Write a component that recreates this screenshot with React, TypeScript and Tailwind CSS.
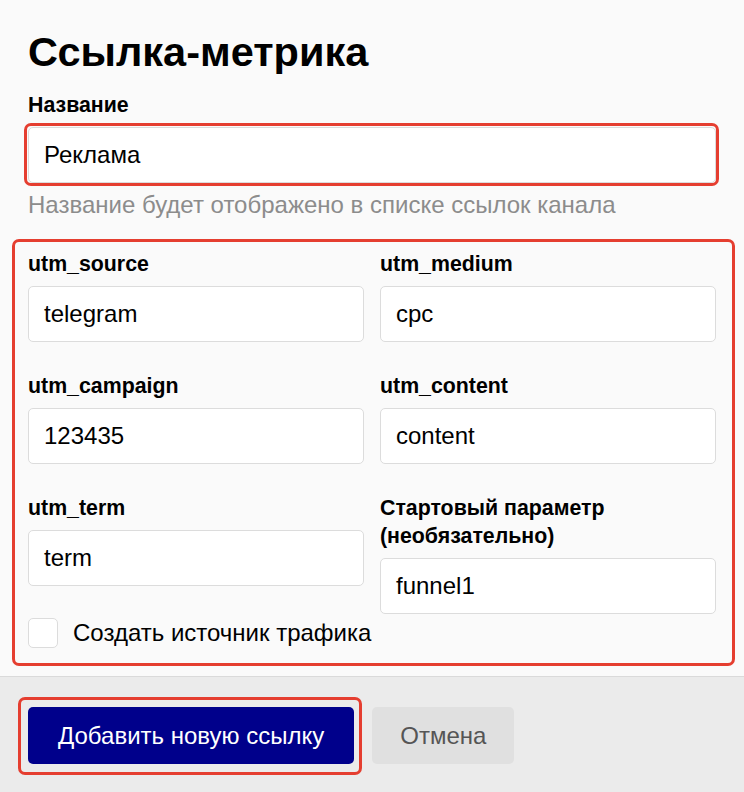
import React from "react";

const font = { fontFamily: '"Liberation Sans", Arial, sans-serif' };

function Field({ label, value }: { label: React.ReactNode; value: string }) {
  return (
    <div className="flex flex-col">
      <div className="text-[21.33px] leading-[28px] font-bold text-black">{label}</div>
      <div className="mt-2 h-[56px] rounded-[5px] border border-[#dcdcdc] bg-white px-[15px] flex items-center text-[24px] text-black">
        {value}
      </div>
    </div>
  );
}

export default function App() {
  return (
    <div className="w-[744px] h-[792px] bg-[#fafafa] flex flex-col overflow-hidden" style={font}>
      <div className="flex-1 px-7 pt-[28px]">
        <h1 className="text-[41.5px] leading-[48px] font-bold text-black">Ссылка-метрика</h1>
        <div className="mt-[15px] text-[21.33px] leading-[28px] font-bold text-black">Название</div>
        <div className="relative mt-2">
          <div className="h-[56px] rounded-[5px] border border-[#dcdcdc] bg-white px-[15px] flex items-center text-[24px] text-black">
            Реклама
          </div>
          <span className="pointer-events-none absolute -left-1 -right-[3px] -top-1 -bottom-[3px] rounded-[7px] border-[3px] border-[#e53e30]" />
        </div>
        <div className="mt-2 text-[24px] leading-[28px] text-[#8c8c8c]">
          Название будет отображено в списке ссылок канала
        </div>
        <div className="relative mt-[31px]">
          <span className="pointer-events-none absolute -left-4 -right-[19px] -top-[11px] -bottom-[18px] rounded-[7px] border-[3px] border-[#e53e30]" />
          <div className="grid grid-cols-2 gap-x-4 gap-y-[30px] items-start">
            <Field label="utm_source" value="telegram" />
            <Field label="utm_medium" value="cpc" />
            <Field label="utm_campaign" value="123435" />
            <Field label="utm_content" value="content" />
            <Field label="utm_term" value="term" />
            <Field
              label={
                <>
                  Стартовый параметр
                  <br />
                  (необязательно)
                </>
              }
              value="funnel1"
            />
          </div>
          <label className="mt-[4px] flex items-center gap-[15px]">
            <span className="w-[30px] h-[30px] rounded-[5px] border border-[#dcdcdc] bg-white" />
            <span className="text-[24px] leading-[28px] text-black">Создать источник трафика</span>
          </label>
        </div>
      </div>
      <div className="h-[116px] shrink-0 border-t border-[#dadada] bg-[#ebebeb] px-7 pt-[30px] flex items-start gap-[18px]">
        <div className="relative">
          <span className="pointer-events-none absolute -left-[10px] -right-[8px] -top-[10px] -bottom-[11px] rounded-[7px] border-[3px] border-[#e53e30]" />
          <button className="h-[57px] px-[30px] rounded-[5px] bg-[#00008b] text-white text-[24px]">
            Добавить новую ссылку
          </button>
        </div>
        <button className="h-[57px] px-[28px] rounded-[5px] bg-[#e0e0e0] text-[#555] text-[24px]">
          Отмена
        </button>
      </div>
    </div>
  );
}
